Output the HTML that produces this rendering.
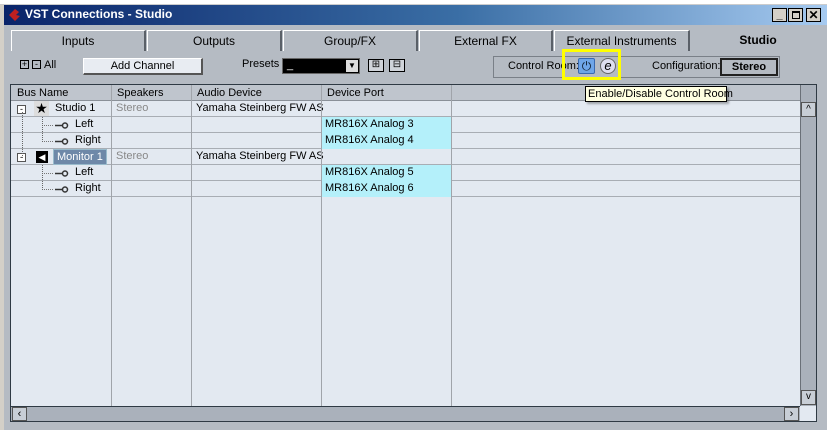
<!DOCTYPE html>
<html><head><style>
*{margin:0;padding:0;box-sizing:border-box}
body{width:827px;height:430px;overflow:hidden;background:#d4d0c8;font-family:"Liberation Sans",sans-serif;font-size:11px;color:#000;position:relative}
.a{position:absolute}
.tab{position:absolute;top:30px;height:21px;background:#b5bbc3;border:1px solid #fff;border-bottom:none;border-right:2px solid #5a6068;text-align:center;line-height:20px;font-size:12px}
.row{position:absolute;left:11px;width:789px;height:16px;border-bottom:1px solid #a8adb4}
.c{position:absolute;top:0;height:16px;line-height:15px;padding-left:4px;white-space:nowrap}
.vl{position:absolute;top:85px;height:321px;width:1px;background:#a0a4aa}
.lk{position:absolute;left:31px;top:0}
</style></head><body>
<div class="a" style="left:0;top:0;width:827px;height:5px;background:#fff;border-bottom:1px solid #ccc"></div>
<div class="a" style="left:4px;top:5px;width:823px;height:425px;background:#b1b8c1;border:1px solid #888"></div>
<div class="a" style="left:4px;top:5px;width:823px;height:20px;background:linear-gradient(90deg,#0a246a,#3a6ea5 55%,#a6caf0)"></div>
<svg class="a" style="left:7px;top:8px" width="14" height="14"><path d="M8 1 L2 7 L8 13 L13 8 L9 7 L12 4Z" fill="#c02020"/></svg>
<div class="a" style="left:25px;top:7px;color:#fff;font-weight:bold;font-size:12px">VST Connections - Studio</div>
<div class="a" style="left:772px;top:8px;width:15px;height:14px;background:#d4d0c8;border:1px solid #000;font-size:11px;text-align:center;line-height:12px;font-weight:bold">_</div>
<div class="a" style="left:788px;top:8px;width:15px;height:14px;background:#d4d0c8;border:1px solid #000"><div style="margin:2px 3px;width:8px;height:8px;border:1px solid #000;border-top-width:2px"></div></div>
<div class="a" style="left:806px;top:8px;width:15px;height:14px;background:#d4d0c8;border:1px solid #000;font-size:12px;text-align:center;line-height:12px;font-weight:bold">✕</div>
<div class="a" style="left:4px;top:25px;width:823px;height:405px;background:#b5bbc3"></div>
<div class="tab" style="left:11px;width:135px">Inputs</div>
<div class="tab" style="left:147px;width:135px">Outputs</div>
<div class="tab" style="left:283px;width:135px">Group/FX</div>
<div class="tab" style="left:419px;width:134px">External FX</div>
<div class="tab" style="left:554px;width:136px">External Instruments</div>
<div class="a" style="left:692px;top:33px;width:132px;text-align:center;font-weight:bold;font-size:12px">Studio</div>
<div class="a" style="left:20px;top:60px;width:9px;height:9px;border:1px solid #000;font-size:9px;line-height:7px;text-align:center">+</div>
<div class="a" style="left:32px;top:60px;width:9px;height:9px;border:1px solid #000;font-size:9px;line-height:6px;text-align:center">-</div>
<div class="a" style="left:44px;top:59px">All</div>
<div class="a" style="left:83px;top:58px;width:120px;height:17px;background:#e8ecf2;border:1px solid #fff;border-right:2px solid #555;border-bottom:2px solid #555;text-align:center;line-height:14px">Add Channel</div>
<div class="a" style="left:242px;top:58px">Presets</div>
<div class="a" style="left:282px;top:58px;width:78px;height:16px;background:#000;border:1px solid #666"><div style="color:#fff;position:absolute;left:4px;top:0">_</div><div style="position:absolute;right:1px;top:1px;width:12px;height:12px;background:#ddd;font-size:8px;text-align:center;line-height:12px">▼</div></div>
<div class="a" style="left:368px;top:59px;width:16px;height:13px;border:1px solid #000;background:#d0d4da;font-size:10px;line-height:10px;text-align:center">⊞</div>
<div class="a" style="left:389px;top:59px;width:16px;height:13px;border:1px solid #000;background:#d0d4da;font-size:10px;line-height:10px;text-align:center">⊟</div>
<div class="a" style="left:493px;top:56px;width:287px;height:22px;border:1px solid #7a8088"></div>
<div class="a" style="left:508px;top:60px">Control Room:</div>
<div class="a" style="left:562px;top:49px;width:59px;height:31px;border:3px solid #ffff00"></div>
<div class="a" style="left:578px;top:58px;width:17px;height:16px;background:#6fa6e8;border:1px solid #3a6ab0;border-radius:2px;color:#123;text-align:center;font-size:12px;line-height:14px">⏻</div>
<div class="a" style="left:600px;top:58px;width:16px;height:16px;border:1px solid #666;border-radius:50%;background:#dde;text-align:center;font-style:italic;line-height:14px;font-size:13px">e</div>
<div class="a" style="left:652px;top:60px">Configuration:</div>
<div class="a" style="left:720px;top:58px;width:58px;height:18px;border:2px solid #222;background:#b5bbc3;text-align:center;font-weight:bold;line-height:14px">Stereo</div>
<div class="a" style="left:10px;top:84px;width:807px;height:338px;border:1px solid #2f3a44;background:#e3e9f1"></div>
<div class="a" style="left:11px;top:85px;width:789px;height:16px;background:#bfc5cd;border-bottom:1px solid #8a9098"></div>
<div class="a" style="left:17px;top:87px">Bus Name</div>
<div class="a" style="left:117px;top:87px">Speakers</div>
<div class="a" style="left:197px;top:87px">Audio Device</div>
<div class="a" style="left:327px;top:87px">Device Port</div>
<div class="row" style="top:101px"><div class="c" style="left:0;padding-left:0"><span style="position:absolute;left:6px;top:4px;width:9px;height:9px;border:1px solid #555;font-size:9px;line-height:6px;text-align:center;background:#fff">-</span><span style="position:absolute;left:23px;top:0;width:15px;height:15px;background:#ddd;text-align:center;font-size:14px;line-height:15px">★</span><span style="position:absolute;left:44px">Studio 1</span></div><div class="c" style="left:101px;color:#888">Stereo</div><div class="c" style="left:181px">Yamaha Steinberg FW AS</div></div>
<div class="row" style="top:117px"><svg class="lk" width="28" height="16"><path d="M0 8.5H12" stroke="#777" stroke-dasharray="1 1"/><path d="M13 8.5H20" stroke="#333" stroke-width="1.5"/><circle cx="23" cy="8.5" r="2.5" fill="none" stroke="#333" stroke-width="1.5"/></svg><div class="c" style="left:60px">Left</div><div class="c" style="left:310px;width:130px;background:#b4f0fa">MR816X Analog 3</div></div>
<div class="row" style="top:133px"><svg class="lk" width="28" height="16"><path d="M0 8.5H12" stroke="#777" stroke-dasharray="1 1"/><path d="M13 8.5H20" stroke="#333" stroke-width="1.5"/><circle cx="23" cy="8.5" r="2.5" fill="none" stroke="#333" stroke-width="1.5"/></svg><div class="c" style="left:60px">Right</div><div class="c" style="left:310px;width:130px;background:#b4f0fa">MR816X Analog 4</div></div>
<div class="row" style="top:149px"><div class="c" style="left:0;padding-left:0"><span style="position:absolute;left:6px;top:4px;width:9px;height:9px;border:1px solid #555;font-size:9px;line-height:6px;text-align:center;background:#fff">-</span><span style="position:absolute;left:25px;top:2px;width:12px;height:12px;background:#000;color:#fff;font-size:9px;line-height:12px;text-align:center">◀</span><span style="position:absolute;left:42px;top:0;height:16px;padding:0 3px;background:#6e88a8;color:#fff;border:1px solid #9bc">Monitor 1</span></div><div class="c" style="left:101px;color:#888">Stereo</div><div class="c" style="left:181px">Yamaha Steinberg FW AS</div></div>
<div class="row" style="top:165px"><svg class="lk" width="28" height="16"><path d="M0 8.5H12" stroke="#777" stroke-dasharray="1 1"/><path d="M13 8.5H20" stroke="#333" stroke-width="1.5"/><circle cx="23" cy="8.5" r="2.5" fill="none" stroke="#333" stroke-width="1.5"/></svg><div class="c" style="left:60px">Left</div><div class="c" style="left:310px;width:130px;background:#b4f0fa">MR816X Analog 5</div></div>
<div class="row" style="top:181px"><svg class="lk" width="28" height="16"><path d="M0 8.5H12" stroke="#777" stroke-dasharray="1 1"/><path d="M13 8.5H20" stroke="#333" stroke-width="1.5"/><circle cx="23" cy="8.5" r="2.5" fill="none" stroke="#333" stroke-width="1.5"/></svg><div class="c" style="left:60px">Right</div><div class="c" style="left:310px;width:130px;background:#b4f0fa">MR816X Analog 6</div></div>
<div class="a" style="left:22px;top:112px;width:1px;height:46px;border-left:1px dotted #666"></div>
<div class="a" style="left:42px;top:117px;width:1px;height:25px;border-left:1px dotted #666"></div>
<div class="a" style="left:42px;top:165px;width:1px;height:25px;border-left:1px dotted #666"></div>
<div class="vl" style="left:111px"></div><div class="vl" style="left:191px"></div><div class="vl" style="left:321px"></div><div class="vl" style="left:451px"></div>
<div class="a" style="left:800px;top:85px;width:16px;height:321px;background:#aab1bb;border-left:1px solid #6a7078"></div>
<div class="a" style="left:801px;top:102px;width:15px;height:15px;background:#c8ced6;border:1px solid #555;text-align:center;font-size:10px;line-height:13px">^</div>
<div class="a" style="left:801px;top:390px;width:15px;height:15px;background:#c8ced6;border:1px solid #555;text-align:center;font-size:10px;line-height:12px">v</div>
<div class="a" style="left:11px;top:406px;width:789px;height:15px;background:#aab1bb;border-top:1px solid #2f3a44"></div>
<div class="a" style="left:12px;top:407px;width:15px;height:14px;background:#c8ced6;border:1px solid #555;text-align:center;font-size:11px;line-height:12px">‹</div>
<div class="a" style="left:784px;top:407px;width:15px;height:14px;background:#c8ced6;border:1px solid #555;text-align:center;font-size:11px;line-height:12px">›</div>
<div class="a" style="left:585px;top:86px;width:142px;height:16px;background:#ffffe1;border:1px solid #000;line-height:14px;padding-left:2px;white-space:nowrap;box-shadow:2px 2px 2px rgba(0,0,0,.3)">Enable/Disable Control Room</div>
</body></html>
